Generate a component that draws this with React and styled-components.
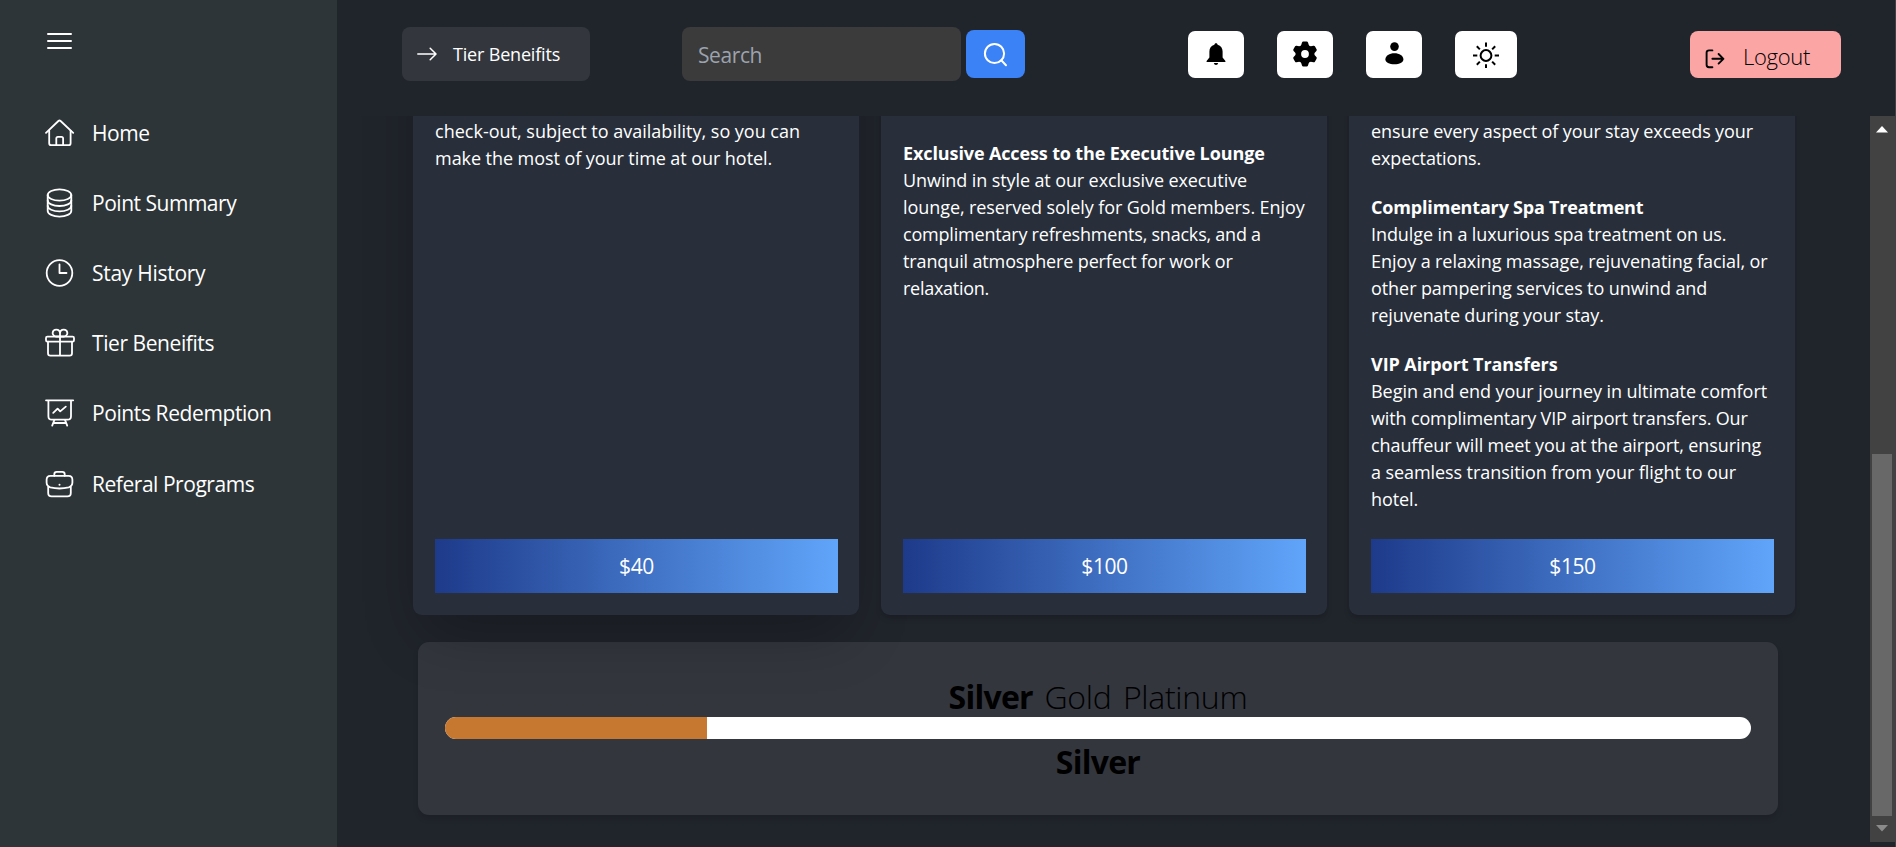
import React from "react";
import styled, { createGlobalStyle } from "styled-components";

const GlobalStyle = createGlobalStyle`
  *, *::before, *::after { box-sizing: border-box; }
  body {
    margin: 0;
    background: #20242b;
    color: #fff;
    font-family: "Open Sans", "Noto Sans", sans-serif;
    font-size: 18px;
    line-height: 27px;
    overflow: hidden;
  }
  svg { display: block; flex: none; }
`;

const Shell = styled.div`
  display: flex;
  width: 100%;
  height: 847px;
  border-right: 1px solid #3f4145;
  overflow: hidden;
`;

const Sidebar = styled.aside`
  flex: none;
  width: 337px;
  height: 100%;
  padding: 26px 0 0 45px;
  background: #2d3538;
`;

const MenuToggle = styled.button`
  display: flex;
  align-items: flex-start;
  height: 71.6px;
  padding: 0;
  border: 0;
  background: none;
  color: #fff;
`;

const NavItem = styled.a`
  display: flex;
  align-items: center;
  gap: 17px;
  height: 70.2px;
  font-size: 21px;
  letter-spacing: ${(p) => p.$tracking}px;
  white-space: nowrap;

  span { padding-top: 1px; }
`;

const Main = styled.main`
  display: flex;
  flex: 1;
  flex-direction: column;
  min-width: 0;
`;

const Header = styled.header`
  display: flex;
  flex: none;
  align-items: center;
  height: 116px;
  padding: 0 54px 8px 65px;
`;

const PageTag = styled.div`
  display: flex;
  align-items: center;
  gap: 16px;
  width: 188px;
  height: 54px;
  margin-right: 92px;
  padding-left: 15px;
  border-radius: 8px;
  background: #33373d;
  letter-spacing: -0.18px;
`;

const SearchForm = styled.div`
  display: flex;
  align-items: center;
  gap: 5px;
`;

const SearchInput = styled.input`
  width: 279px;
  height: 54px;
  padding: 2px 16px 0;
  border: 0;
  border-radius: 8px;
  background: #3b3b3b;
  color: #fff;
  font: inherit;
  font-size: 21px;
  letter-spacing: -0.4px;

  &::placeholder { color: #9ca3af; opacity: 1; }
`;

const SearchButton = styled.button`
  display: grid;
  place-items: center;
  width: 59px;
  height: 48px;
  padding: 0 1px 0 0;
  border: 0;
  border-radius: 8px;
  background: #3b82f6;
  color: #fff;
`;

const Actions = styled.div`
  display: flex;
  gap: 33px;
  margin-left: 163px;
`;

const ActionButton = styled.button`
  display: grid;
  place-items: center;
  width: ${(p) => (p.$wide ? 62 : 56)}px;
  height: 47px;
  padding: 0;
  border: 0;
  border-radius: 7px;
  background: #fff;
  color: #000;
`;

const LogoutButton = styled.button`
  display: flex;
  align-items: center;
  gap: 18px;
  width: 151px;
  height: 47px;
  margin-left: auto;
  padding: 5px 0 0 15px;
  border: 0;
  border-radius: 8px;
  background: #fca5a5;
  color: #000;
  font: inherit;
  font-size: 22px;
  font-weight: 300;
  letter-spacing: -0.3px;

  svg { margin-top: 4px; }
`;

const ScrollArea = styled.div`
  display: flex;
  flex: none;
  height: 726px;
  overflow: hidden;
`;

const Content = styled.div`
  flex: 1;
  height: 731px;
`;

const TierGrid = styled.section`
  display: grid;
  grid-template-columns: repeat(3, 446px);
  gap: 22px;
  height: 599px;
  margin-top: -100px;
  padding-left: 76px;
`;

const TierCard = styled.article`
  display: flex;
  flex-direction: column;
  justify-content: space-between;
  padding: 102.4px 21px 22px 22px;
  border-radius: 9px;
  background: #282f3b;
  box-shadow: ${(p) =>
    p.$raised
      ? "0 28px 56px -13px rgba(0, 0, 0, 0.28)"
      : "0 4px 7px -1px rgba(0, 0, 0, 0.12), 0 2px 4px -2px rgba(0, 0, 0, 0.12)"};
`;

const Benefit = styled.div`
  margin-bottom: 21.6px;
`;

const Line = styled.div`
  font-weight: ${(p) => (p.$bold ? 700 : 400)};
  letter-spacing: ${(p) => p.$tracking}px;
  word-spacing: -0.15px;
  white-space: pre;
`;

const Price = styled.div`
  flex: none;
  height: 54px;
  background: linear-gradient(to right, #1e3a8a, #60a5fa);
  font-size: 21px;
  line-height: 55px;
  letter-spacing: -0.4px;
  text-align: center;
`;

const ProgressPanel = styled.section`
  width: 1360px;
  height: 173px;
  margin: 27px 0 0 81px;
  padding: 27px;
  border-radius: 11px;
  background: rgba(255, 255, 255, 0.085);
  box-shadow: 0 4px 7px -1px rgba(0, 0, 0, 0.12);
`;

const TierNames = styled.div`
  display: flex;
  justify-content: center;
  gap: 11.5px;
  height: 48px;
  padding-top: ${(p) => (p.$above ? 4 : 0)}px;
  color: #000;
  font-size: 32px;
  font-weight: 300;
  line-height: ${(p) => (p.$above ? 48 : 46)}px;
  letter-spacing: -0.3px;

  strong { font-weight: 700; letter-spacing: -0.75px; }
`;

const Track = styled.div`
  height: 22px;
  border-radius: 11px;
  background: #fff;
  overflow: hidden;
`;

const Fill = styled.div`
  height: 100%;
  background: #c67830;
`;

const Scrollbar = styled.div`
  display: flex;
  flex: none;
  flex-direction: column;
  align-items: center;
  justify-content: space-between;
  width: 25px;
  height: 726px;
  padding: 10px 3px 10px 2px;
  background: #424242;
`;

const Thumb = styled.div`
  width: 20px;
  height: 362px;
  margin: auto 0 9px;
  background: #686868;
`;

const Glyph = ({ children, size = 30, stroke = 1.8, ...rest }) => (
  <svg
    width={size}
    height={size}
    viewBox={`0 0 ${size} ${size}`}
    fill="none"
    stroke="currentColor"
    strokeWidth={stroke}
    strokeLinecap="round"
    strokeLinejoin="round"
    {...rest}
  >
    {children}
  </svg>
);

const HomeIcon = () => (
  <Glyph>
    <path d="M1 14.8 13.4 3Q14.5 2 15.6 3L28.2 14.8" />
    <path d="M4.2 12.6V25.2Q4.2 27.2 6.2 27.2H23.6Q25.6 27.2 25.6 25.2V12.6" />
    <path d="M11.3 27V20.5Q11.3 18.9 12.9 18.9H16.5Q18.1 18.9 18.1 20.5V27" />
  </Glyph>
);

const CoinsIcon = () => (
  <Glyph>
    <ellipse cx="14.5" cy="7" rx="11.8" ry="5.6" />
    <path d="M2.7 7V23C2.7 26 8 28.6 14.5 28.6S26.3 26 26.3 23V7" />
    <path d="M2.7 12.5C2.7 15.6 8 18 14.5 18S26.3 15.6 26.3 12.5M2.7 17.8C2.7 20.9 8 23.3 14.5 23.3S26.3 20.9 26.3 17.8" />
  </Glyph>
);

const ClockIcon = () => (
  <Glyph>
    <circle cx="14.5" cy="15" r="12.8" />
    <path d="M14.5 6.3V15H21.5" />
  </Glyph>
);

const GiftIcon = () => (
  <Glyph>
    <rect x="1" y="8.7" width="28" height="5" rx="1.4" />
    <path d="M3 13.7V25.2Q3 27.6 5.4 27.6H24.6Q27 27.6 27 25.2V13.7M15 8.5V27.6" />
    <path d="M15 8.5H10.8C5.8 7 7.4 1.6 11.2 1.6C13.6 1.6 15 3.4 15 5.6V8.5ZM15 8.5H19.2C24.2 7 22.6 1.6 18.8 1.6C16.4 1.6 15 3.4 15 5.6" />
  </Glyph>
);

const BoardIcon = () => (
  <Glyph>
    <path d="M1 2.3H28.2M3.4 2.5V18.2Q3.4 21.7 6.9 21.7H22.5Q26 21.7 26 18.2V2.5" />
    <path d="M9.4 21.9 7.2 27.6M20 21.9 22.2 27.6M8.3 25H21.1" />
    <path d="M8.2 14.8 12.6 10.6 15.2 13.4 20.8 8.6" />
  </Glyph>
);

const BriefcaseIcon = () => (
  <Glyph>
    <path d="M9.3 6.8V5.2Q9.3 2.8 11.7 2.8H17.3Q19.7 2.8 19.7 5.2V6.8" />
    <path d="M5.4 6.9H23.6Q27.4 6.9 27.4 10.7V13.6Q27.4 17.2 23.7 18.4Q14.5 20.6 5.3 18.4Q1.6 17.2 1.6 13.6V10.7Q1.6 6.9 5.4 6.9Z" />
    <path d="M3.2 18V24Q3.2 27.4 6.6 27.4H22.4Q25.8 27.4 25.8 24V18" />
    <circle cx="14.5" cy="15.8" r="1" fill="currentColor" stroke="none" />
  </Glyph>
);

const MenuIcon = () => (
  <Glyph stroke={2}>
    <path d="M3 8H26M3 15H26M3 22H26" />
  </Glyph>
);

const ArrowIcon = () => (
  <Glyph size={20} stroke={1.5}>
    <path d="M0.8 10H18.6M13.2 4.2 19 10 13.2 15.8" />
  </Glyph>
);

const SearchIcon = () => (
  <Glyph size={26} stroke={2}>
    <circle cx="12.5" cy="12.5" r="9.6" />
    <path d="M19.3 19.3 24 24.3" />
  </Glyph>
);

const BellIcon = () => (
  <Glyph size={26} fill="currentColor" stroke={0}>
    <path d="M13 2.2C13.9 2.2 14.6 2.9 14.6 3.7C18 4.5 19.6 7.3 19.6 10.6V16.6L22.4 20V21H3.6V20L6.4 16.6V10.6C6.4 7.3 8 4.5 11.4 3.7C11.4 2.9 12.1 2.2 13 2.2Z" />
    <path d="M10.8 22H15.2Q14.8 24 13 24T10.8 22Z" />
  </Glyph>
);

const teeth = [0, 60, 120, 180, 240, 300];
const GearIcon = () => (
  <Glyph size={26}>
    <g fill="currentColor" stroke="none">
      {teeth.map((a) => (
        <path
          key={a}
          transform={`rotate(${a} 13 13)`}
          d="M8.4 6.5 10 1.6Q10.3 0.6 11.3 0.6H14.7Q15.7 0.6 16 1.6L17.6 6.5Z"
        />
      ))}
    </g>
    <circle cx="13" cy="13" r="6.7" strokeWidth="5.6" />
  </Glyph>
);

const UserIcon = () => (
  <Glyph size={26} fill="currentColor" stroke={0}>
    <circle cx="13.5" cy="5.6" r="4.3" />
    <path d="M4.4 18.4C4.4 14.7 8.4 12.2 13.4 12.2S22.4 14.7 22.4 18.4C22.4 21.2 18.4 23.2 13.4 23.2S4.4 21.2 4.4 18.4Z" />
  </Glyph>
);

const rays = [0, 45, 90, 135, 180, 225, 270, 315];
const SunIcon = () => (
  <Glyph size={28} stroke={2} strokeLinecap="butt">
    <circle cx="14" cy="15.5" r="5.4" />
    {rays.map((a) => (
      <path key={a} d="M14 2.5V6.8" transform={`rotate(${a} 14 15.5)`} />
    ))}
  </Glyph>
);

const LogoutIcon = () => (
  <Glyph size={20} stroke={1.9}>
    <path d="M7.4 1.4H4Q1.6 1.4 1.6 3.8V15.8Q1.6 18.2 4 18.2H7.4M7.4 9.8H18.4M13.6 5 18.4 9.8 13.6 14.6" />
  </Glyph>
);

const UpArrow = () => (
  <svg width="12" height="7" viewBox="0 0 12 7">
    <path d="M6 0 12 6.5H0Z" fill="#fff" />
  </svg>
);

const DownArrow = () => (
  <svg width="12" height="7" viewBox="0 0 12 7">
    <path d="M0 0H12L6 6.5Z" fill="#8b8b8b" />
  </svg>
);

const navigation = [
  { label: "Home", icon: HomeIcon, tracking: -0.4 },
  { label: "Point Summary", icon: CoinsIcon, tracking: -0.48 },
  { label: "Stay History", icon: ClockIcon, tracking: -0.28 },
  { label: "Tier Beneifits", icon: GiftIcon, tracking: -0.42 },
  { label: "Points Redemption", icon: BoardIcon, tracking: -0.4 },
  { label: "Referal Programs", icon: BriefcaseIcon, tracking: -0.46 },
];

// Each benefit is a list of lines: [text, letter spacing, bold]
const tiers = [
  {
    price: "$40",
    raised: true,
    benefits: [
      [
        ["check-out, subject to availability, so you can", 0.02],
        ["make the most of your time at our hotel.", -0.034],
      ],
    ],
  },
  {
    price: "$100",
    benefits: [
      [],
      [
        ["Exclusive Access to the Executive Lounge", -0.103, true],
        ["Unwind in style at our exclusive executive", -0.07],
        ["lounge, reserved solely for Gold members. Enjoy", -0.067],
        ["complimentary refreshments, snacks, and a", -0.197],
        ["tranquil atmosphere perfect for work or", -0.119],
        ["relaxation.", -0.28],
      ],
    ],
  },
  {
    price: "$150",
    benefits: [
      [
        ["ensure every aspect of your stay exceeds your", -0.078],
        ["expectations.", -0.13],
      ],
      [
        ["Complimentary Spa Treatment", -0.17, true],
        ["Indulge in a luxurious spa treatment on us.", -0.072],
        ["Enjoy a relaxing massage, rejuvenating facial, or", -0.055],
        ["other pampering services to unwind and", -0.064],
        ["rejuvenate during your stay.", -0.08],
      ],
      [
        ["VIP Airport Transfers", -0.05, true],
        ["Begin and end your journey in ultimate comfort", -0.024],
        ["with complimentary VIP airport transfers. Our", -0.119],
        ["chauffeur will meet you at the airport, ensuring", -0.09],
        ["a seamless transition from your flight to our", -0.059],
        ["hotel.", -0.08],
      ],
    ],
  },
];

const progress = 20.05;

export default function App() {
  return (
    <>
      <GlobalStyle />
      <Shell>
        <Sidebar>
          <MenuToggle aria-label="Toggle menu">
            <MenuIcon />
          </MenuToggle>
          <nav>
            {navigation.map(({ label, icon: Icon, tracking }) => (
              <NavItem key={label} $tracking={tracking}>
                <Icon />
                <span>{label}</span>
              </NavItem>
            ))}
          </nav>
        </Sidebar>
        <Main>
          <Header>
            <PageTag>
              <ArrowIcon />
              Tier Beneifits
            </PageTag>
            <SearchForm>
              <SearchInput placeholder="Search" />
              <SearchButton aria-label="Search">
                <SearchIcon />
              </SearchButton>
            </SearchForm>
            <Actions>
              <ActionButton><BellIcon /></ActionButton>
              <ActionButton><GearIcon /></ActionButton>
              <ActionButton><UserIcon /></ActionButton>
              <ActionButton $wide><SunIcon /></ActionButton>
            </Actions>
            <LogoutButton>
              <LogoutIcon />
              Logout
            </LogoutButton>
          </Header>
          <ScrollArea>
            <Content>
              <TierGrid>
                {tiers.map((tier) => (
                  <TierCard key={tier.price} $raised={tier.raised}>
                    <div>
                      {tier.benefits.map((lines, i) => (
                        <Benefit key={i}>
                          {lines.map(([text, tracking, bold]) => (
                            <Line key={text} $tracking={tracking} $bold={bold}>
                              {text}
                            </Line>
                          ))}
                        </Benefit>
                      ))}
                    </div>
                    <Price>{tier.price}</Price>
                  </TierCard>
                ))}
              </TierGrid>
              <ProgressPanel>
                <TierNames $above>
                  <strong>Silver</strong>
                  <span>Gold</span>
                  <span>Platinum</span>
                </TierNames>
                <Track>
                  <Fill style={{ width: `${progress}%` }} />
                </Track>
                <TierNames>
                  <strong>Silver</strong>
                </TierNames>
              </ProgressPanel>
            </Content>
            <Scrollbar>
              <UpArrow />
              <Thumb />
              <DownArrow />
            </Scrollbar>
          </ScrollArea>
        </Main>
      </Shell>
    </>
  );
}
